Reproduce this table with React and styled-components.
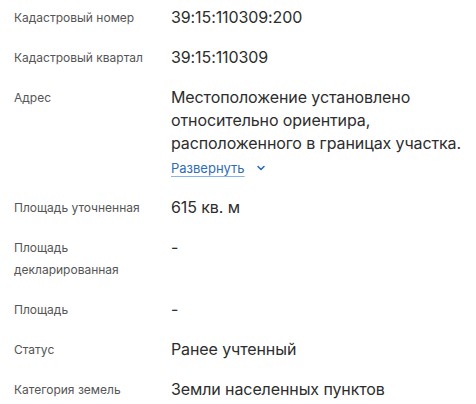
import styled, { createGlobalStyle } from "styled-components";

const GlobalStyle = createGlobalStyle`
  body {
    margin: 0;
    background: #fff;
    font-family: Inter, "Noto Sans", "Liberation Sans", sans-serif;
  }
`;

const List = styled.dl`
  margin: 0;
  padding: 6px 0 0 14px;
  display: flex;
  flex-direction: column;
  gap: 17px;
`;

const Row = styled.div`
  display: grid;
  grid-template-columns: 157px 1fr;
  align-items: start;
`;

const Label = styled.dt`
  font-size: 12px;
  line-height: 22px;
  color: #555;
  padding-top: 1px;
  max-width: ${(p) => (p.$narrow ? "120px" : "none")};
`;

const Value = styled.dd`
  margin: 0;
  font-size: 16px;
  line-height: 23px;
  color: #2d2d2d;
  letter-spacing: -0.1px;
`;

const Expand = styled.button`
  display: flex;
  align-items: center;
  gap: 11px;
  margin-top: 2px;
  padding: 0;
  border: 0;
  background: none;
  font-family: inherit;
  font-size: 13px;
  line-height: 22px;
  color: #2e6db4;
  cursor: pointer;
`;

const ExpandText = styled.span`
  text-decoration: underline;
  text-decoration-color: #8fb3dc;
  text-underline-offset: 3px;
`;

const rows = [
  { label: "Кадастровый номер", value: "39:15:110309:200" },
  { label: "Кадастровый квартал", value: "39:15:110309" },
  {
    label: "Адрес",
    value:
      "Местоположение установлено относительно ориентира, расположенного в границах участка.",
    expandable: true,
  },
  { label: "Площадь уточненная", value: "615 кв. м" },
  { label: "Площадь декларированная", value: "-", narrow: true },
  { label: "Площадь", value: "-" },
  { label: "Статус", value: "Ранее учтенный" },
  { label: "Категория земель", value: "Земли населенных пунктов" },
];

const Chevron = () => (
  <svg width="10" height="10" viewBox="0 0 10 10" fill="none">
    <path
      d="M2 3.5 5 6.5 8 3.5"
      stroke="#2e6db4"
      strokeWidth="1.6"
      strokeLinecap="round"
      strokeLinejoin="round"
    />
  </svg>
);

const App = () => {
  return (
    <>
      <GlobalStyle />
      <List>
        {rows.map((row) => (
          <Row key={row.label}>
            <Label $narrow={row.narrow}>{row.label}</Label>
            <Value>
              {row.value}
              {row.expandable && (
                <Expand>
                  <ExpandText>Развернуть</ExpandText>
                  <Chevron />
                </Expand>
              )}
            </Value>
          </Row>
        ))}
      </List>
    </>
  );
};

export default App;
